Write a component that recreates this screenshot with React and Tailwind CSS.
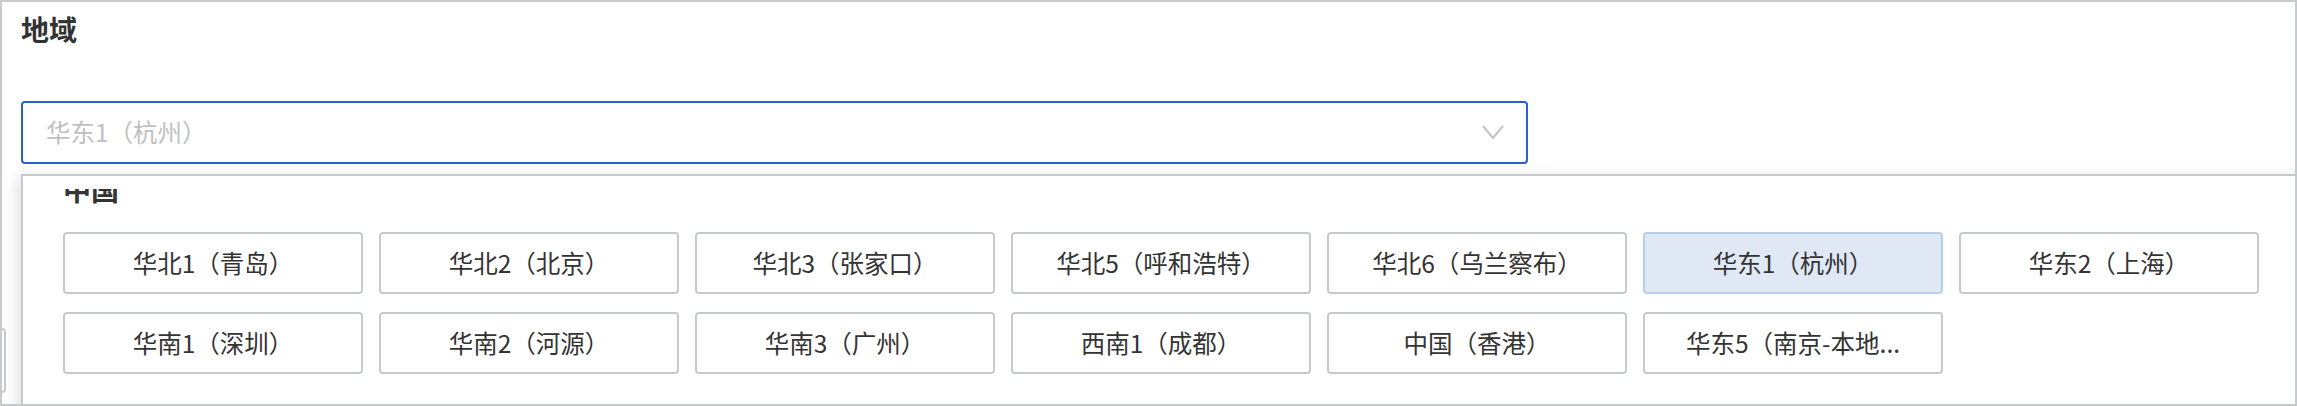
import React from "react";

const rows = [
  ["华北1（青岛）", "华北2（北京）", "华北3（张家口）", "华北5（呼和浩特）", "华北6（乌兰察布）", "华东1（杭州）", "华东2（上海）"],
  ["华南1（深圳）", "华南2（河源）", "华南3（广州）", "西南1（成都）", "中国（香港）", "华东5（南京-本地..."],
];

function RegionButton({ label, selected }) {
  return (
    <div
      className={
        selected
          ? "h-[62px] flex items-center justify-center rounded-[4px] border-2 border-[#b7cfea] bg-[#dfe8f4] text-[24.5px] text-[#333333] whitespace-nowrap"
          : "h-[62px] flex items-center justify-center rounded-[4px] border-2 border-[#c6c9cd] bg-white text-[24.5px] text-[#333333] whitespace-nowrap"
      }
    >
      {label}
    </div>
  );
}

export default function App() {
  return (
    <div
      className="relative w-[2297px] h-[406px] overflow-hidden border-2 border-[#c8cacd] bg-white"
      style={{ fontFamily: '"Noto Sans CJK SC", "Noto Sans", sans-serif' }}
    >
      {/* partially hidden element behind the dropdown */}
      <div className="absolute left-[-22px] top-[326px] w-[26px] h-[65px] rounded-[4px] border-2 border-[#c6c9cd] bg-white" />

      <div className="relative pl-[19px]">
        <div className="mt-[7px] h-[40px] leading-[40px] text-[28px] font-semibold text-[#333333]">
          地域
        </div>

        <div className="mt-[52px] w-[1507px] h-[63px] flex items-center justify-between rounded-[4px] border-2 border-[#2962c4] bg-white pl-[23px] pr-[22px]">
          <span className="text-[24.5px] text-[#bfbfbf]">华东1（杭州）</span>
          <svg width="22" height="15" viewBox="0 0 22 15" fill="none">
            <polyline points="1,1 11,13 21,1" stroke="#c4c4c4" strokeWidth="2" fill="none" />
          </svg>
        </div>

        <div className="mt-[10px] w-[2300px] border-2 border-[#c6c9cd] bg-white pt-[13px] pl-[40px] shadow-[-3px_3px_14px_rgba(0,0,0,0.13)]">
          <div className="h-[300px] overflow-hidden">
            <div className="mt-[-20px]">
              <div className="h-[40px] leading-[40px] text-[28px] font-semibold text-[#333333] mb-[23px]">
                中国
              </div>
              <div className="w-[2196px] grid grid-cols-7 gap-x-[16px] gap-y-[18px]">
                {rows.flat().map((r) => (
                  <RegionButton key={r} label={r} selected={r === "华东1（杭州）"} />
                ))}
              </div>
            </div>
          </div>
        </div>
      </div>
    </div>
  );
}
